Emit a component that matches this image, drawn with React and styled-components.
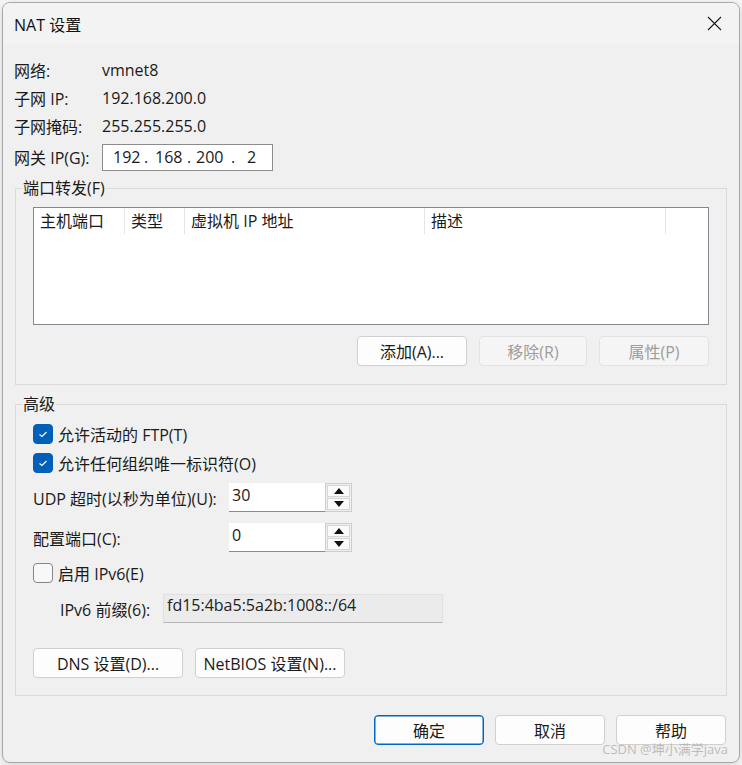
import React from 'react';
import styled, { createGlobalStyle } from 'styled-components';

const GlobalStyle = createGlobalStyle`
  html, body { margin: 0; padding: 0; background: #f7f7f7; }
  body {
    font-family: "Open Sans", "Noto Sans CJK SC", sans-serif;
    font-size: 16px;
    color: #1a1a1a;
  }
  * { box-sizing: border-box; }
`;

const Page = styled.div`
  width: 742px;
  height: 765px;
  padding: 2px;
`;

const Dialog = styled.div`
  position: relative;
  width: 738px;
  height: 761px;
  background: #f0f0f0;
  border: 1px solid #a8a8a8;
  border-radius: 8px;
  overflow: hidden;
  box-shadow: 0 2px 8px rgba(0, 0, 0, 0.15);
`;

const TitleBar = styled.div`
  height: 41px;
  background: #f3f3f3;
  display: flex;
  align-items: center;
  justify-content: space-between;
  padding: 0 17px 0 11px;
  font-size: 16px;
  color: #111;
`;

const Body = styled.div`
  padding: 12px 12px 0 11px;
`;

const InfoGrid = styled.div`
  display: grid;
  grid-template-columns: 88px auto;
  grid-auto-rows: 28px;
  align-items: center;
`;

const GatewayRow = styled.div`
  display: grid;
  grid-template-columns: 88px auto;
  height: 30px;
  margin-top: 2px;
  align-items: center;
`;

const IpBox = styled.div`
  width: 171px;
  height: 27px;
  background: #fff;
  border: 1px solid #8c8c8c;
  display: flex;
  align-items: center;
  padding-left: 10px;
`;

const Octet = styled.span`
  display: inline-block;
  width: ${p => p.$w}px;
  white-space: nowrap;
`;

const Group = styled.div`
  position: relative;
  margin: ${p => p.$top}px 0 0 1px;
  border: 1px solid #dadada;
  padding: ${p => p.$pad};
`;

const Legend = styled.span`
  position: absolute;
  top: -11px;
  left: 6px;
  padding: 0 1px;
  line-height: 20px;
  background: #f0f0f0;
`;

const List = styled.div`
  height: 118px;
  background: #fff;
  border: 1px solid #838790;
`;

const HeaderRow = styled.div`
  display: flex;
  height: 26px;
`;

const HeaderCell = styled.div`
  width: ${p => p.$w}px;
  padding-left: 6px;
  line-height: 26px;
  border-right: 1px solid #e5e5e5;
  white-space: nowrap;
`;

const Actions = styled.div`
  display: flex;
  justify-content: flex-end;
  gap: 12px;
  margin-top: 11px;
`;

const Button = styled.button`
  width: ${p => p.$w || 110}px;
  height: 30px;
  font: inherit;
  font-size: 16px;
  color: ${p => (p.disabled ? '#9d9d9d' : '#1a1a1a')};
  background: ${p => (p.disabled ? '#f5f5f5' : '#fdfdfd')};
  border: 1px solid ${p => (p.$primary ? '#0067c0' : p.disabled ? '#e3e3e3' : '#d0d0d0')};
  box-shadow: ${p => (p.$primary ? 'inset 0 0 0 0.5px #0067c0' : 'none')};
  border-radius: 4px;
  padding: 0;
  white-space: nowrap;
`;

const CheckRow = styled.label`
  display: flex;
  align-items: center;
  gap: 5px;
  height: ${p => p.$h || 29}px;
  margin-top: ${p => p.$mt || 0}px;
`;

const Box = styled.span`
  width: 20px;
  height: 20px;
  border-radius: 4px;
  display: inline-flex;
  align-items: center;
  justify-content: center;
  background: ${p => (p.$on ? '#005fb8' : '#f8f8f8')};
  border: 1px solid ${p => (p.$on ? '#005fb8' : '#868686')};
`;

const FieldRow = styled.div`
  display: flex;
  align-items: center;
  height: 29px;
  margin-top: ${p => p.$mt}px;
`;

const FieldLabel = styled.span`
  width: ${p => p.$w}px;
  padding-left: ${p => p.$indent || 0}px;
  white-space: nowrap;
`;

const SpinInput = styled.div`
  width: 96px;
  height: 29px;
  background: #fff;
  border-bottom: 1px solid #8a8a8a;
  padding: 0 3px;
  line-height: 25px;
`;

const SpinButtons = styled.div`
  width: 27px;
  height: 29px;
  border: 1px solid #cdcdcd;
  background: #f0f0f0;
  display: flex;
  flex-direction: column;
  gap: 1px;
  padding: 1px;
`;

const SpinBtn = styled.div`
  flex: 1;
  background: #fafafa;
  border: 1px solid #d4d4d4;
  display: flex;
  align-items: center;
  justify-content: center;
`;

const PrefixBox = styled.div`
  width: 280px;
  height: 29px;
  background: #ebebeb;
  border: 1px solid #e0e0e0;
  border-bottom-color: #b8b8b8;
  padding: 0 3px;
  line-height: 20px;
  color: #222;
`;

const ButtonRow = styled.div`
  display: flex;
  gap: 12px;
  margin-top: ${p => p.$mt}px;
`;

const Footer = styled.div`
  display: flex;
  justify-content: flex-end;
  gap: 11px;
  margin-top: 19px;
  padding-right: 1px;
`;

const Watermark = styled.span`
  position: absolute;
  right: 11px;
  bottom: 4px;
  font-size: 13px;
  color: rgba(170, 170, 170, 0.75);
  white-space: nowrap;
`;

const CloseIcon = () => (
  <svg width="15" height="15" viewBox="0 0 15 15">
    <path d="M1 1 L14 14 M14 1 L1 14" stroke="#1a1a1a" strokeWidth="1.1" fill="none" />
  </svg>
);

const Check = () => (
  <svg width="12" height="10" viewBox="0 0 12 10">
    <polyline points="2.5,5.5 5,7.5 9.5,3" stroke="#fff" strokeWidth="1.2" fill="none" />
  </svg>
);

const Arrow = ({ up }) => (
  <svg width="10" height="6" viewBox="0 0 10 6">
    <polygon points={up ? '0,6 10,6 5,0' : '0,0 10,0 5,6'} fill="#111" />
  </svg>
);

const Spinner = ({ value }) => (
  <>
    <SpinInput>{value}</SpinInput>
    <SpinButtons>
      <SpinBtn><Arrow up /></SpinBtn>
      <SpinBtn><Arrow /></SpinBtn>
    </SpinButtons>
  </>
);

const columns = [
  { label: '主机端口', w: 91 },
  { label: '类型', w: 60 },
  { label: '虚拟机 IP 地址', w: 240 },
  { label: '描述', w: 241 },
];

const octets = [
  { t: '192', w: 31 },
  { t: '.', w: 11 },
  { t: '168', w: 32 },
  { t: '.', w: 9 },
  { t: '200', w: 35 },
  { t: '.', w: 16 },
  { t: '2', w: 12 },
];

export default function App() {
  return (
    <Page>
      <GlobalStyle />
      <Dialog>
        <TitleBar>
          <span>NAT 设置</span>
          <CloseIcon />
        </TitleBar>
        <Body>
          <InfoGrid>
            <span>网络:</span><span>vmnet8</span>
            <span>子网 IP:</span><span>192.168.200.0</span>
            <span>子网掩码:</span><span>255.255.255.0</span>
          </InfoGrid>
          <GatewayRow>
            <span>网关 IP(G):</span>
            <IpBox>
              {octets.map((o, i) => (
                <Octet key={i} $w={o.w}>{o.t}</Octet>
              ))}
            </IpBox>
          </GatewayRow>

          <Group $top={16} $pad="18px 17px 18px 17px">
            <Legend>端口转发(F)</Legend>
            <List>
              <HeaderRow>
                {columns.map(c => (
                  <HeaderCell key={c.label} $w={c.w}>{c.label}</HeaderCell>
                ))}
              </HeaderRow>
            </List>
            <Actions>
              <Button>添加(A)...</Button>
              <Button $w={108} disabled>移除(R)</Button>
              <Button disabled>属性(P)</Button>
            </Actions>
          </Group>

          <Group $top={19} $pad="14px 17px 17px 17px">
            <Legend>高级</Legend>
            <CheckRow>
              <Box $on><Check /></Box>
              <span>允许活动的 FTP(T)</span>
            </CheckRow>
            <CheckRow>
              <Box $on><Check /></Box>
              <span>允许任何组织唯一标识符(O)</span>
            </CheckRow>
            <FieldRow $mt={6}>
              <FieldLabel $w={196}>UDP 超时(以秒为单位)(U):</FieldLabel>
              <Spinner value="30" />
            </FieldRow>
            <FieldRow $mt={11}>
              <FieldLabel $w={196}>配置端口(C):</FieldLabel>
              <Spinner value="0" />
            </FieldRow>
            <CheckRow $h={28} $mt={7}>
              <Box />
              <span>启用 IPv6(E)</span>
            </CheckRow>
            <FieldRow $mt={7}>
              <FieldLabel $w={130} $indent={27}>IPv6 前缀(6):</FieldLabel>
              <PrefixBox>fd15:4ba5:5a2b:1008::/64</PrefixBox>
            </FieldRow>
            <ButtonRow $mt={25}>
              <Button $w={150}>DNS 设置(D)...</Button>
              <Button $w={150}>NetBIOS 设置(N)...</Button>
            </ButtonRow>
          </Group>

          <Footer>
            <Button $primary>确定</Button>
            <Button>取消</Button>
            <Button>帮助</Button>
          </Footer>
        </Body>
        <Watermark>CSDN @坤小满学java</Watermark>
      </Dialog>
    </Page>
  );
}
